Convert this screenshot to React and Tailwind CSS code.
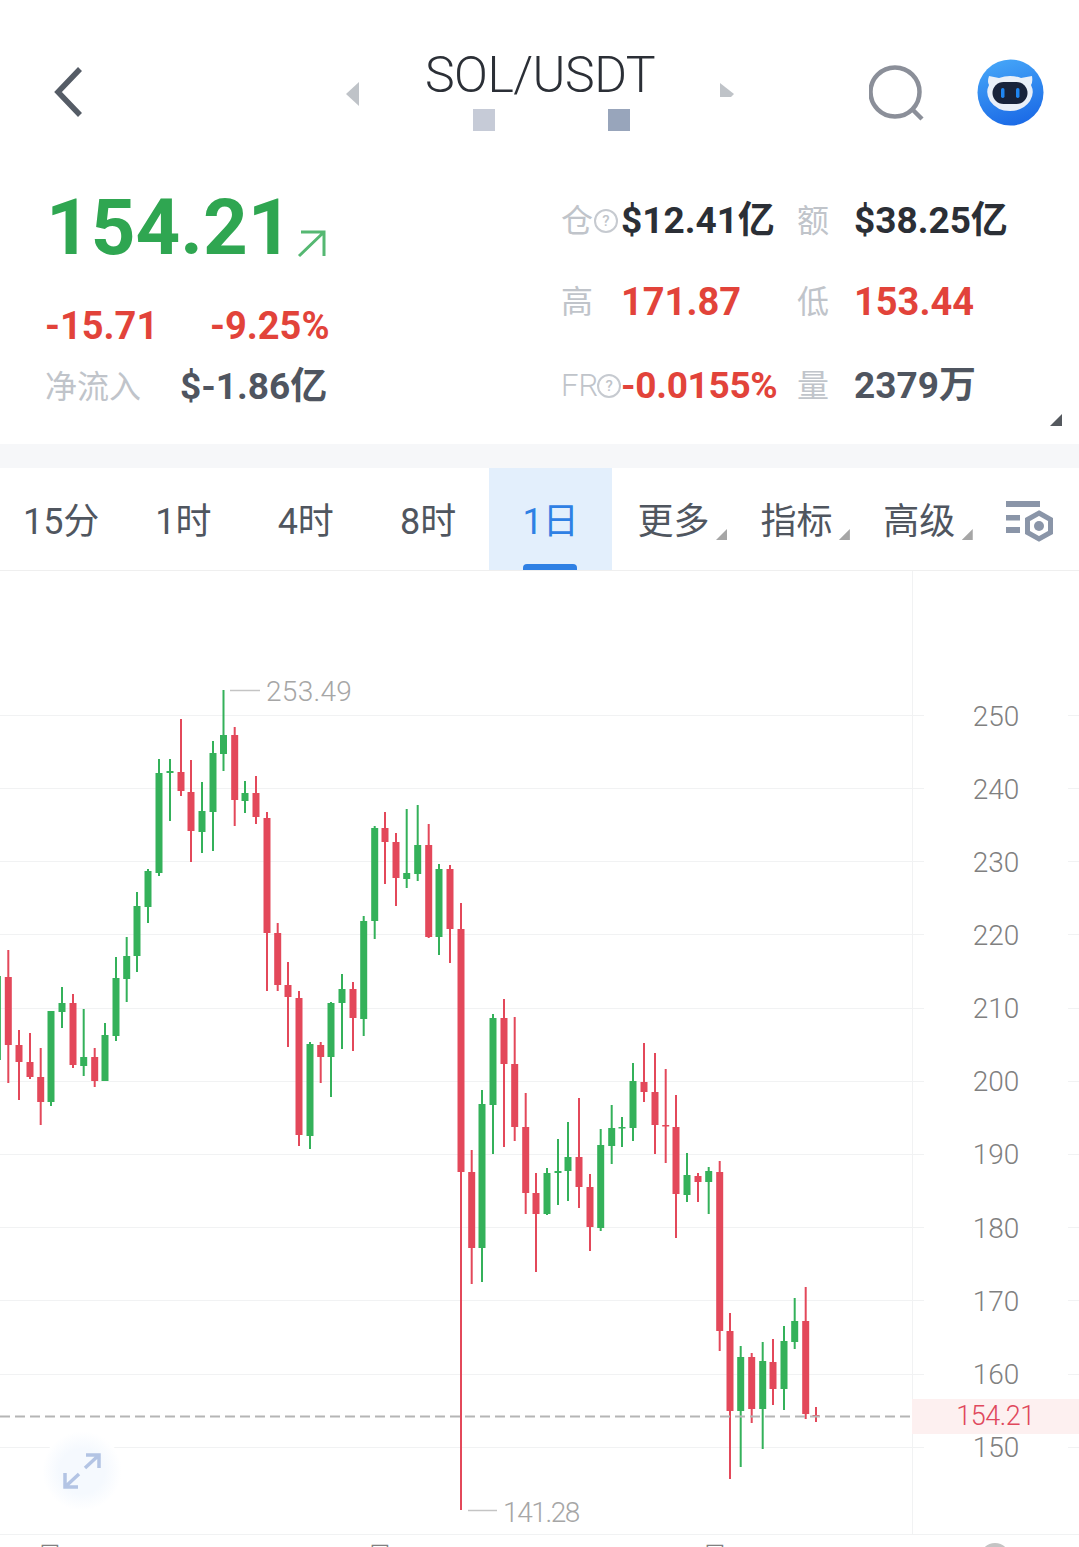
import React from 'react';

const G = '#34b15a';
const R = '#e3485a';

// x, wick top, wick bottom, body top, body bottom, colour (page coordinates)
const candles = [
    [-2.6, 960, 1060, 976, 1060, G],
    [8.3, 950, 1083, 977, 1045, R], [19, 1030, 1100, 1045, 1062, R], [30, 1033, 1079, 1062, 1077, R],
    [40.7, 1048, 1125, 1077, 1102, R], [51, 1011, 1106, 1011, 1102, G], [62, 987, 1028, 1003, 1012, G],
    [73, 994, 1068, 1003, 1065, R], [83.7, 1009, 1076, 1057, 1066, G], [94.7, 1048, 1087, 1057, 1081, R],
    [105, 1023, 1081, 1035, 1081, G], [116, 957, 1041, 978, 1036, G], [126.7, 937, 1002, 956, 979, G],
    [137, 892, 972, 906, 956, G], [148, 869, 923, 871, 907, G], [159, 759, 876, 773, 873, G],
    [170, 759, 821, 771, 773, G], [181, 719, 796, 772, 791, R], [191, 760, 862, 792, 831, R],
    [202, 782, 853, 811, 832, G], [213, 741, 851, 753, 812, G], [223.5, 690, 771, 735, 754, G],
    [234.7, 727, 826, 735, 800, R], [245, 781, 813, 793, 801, G], [256, 776, 824, 793, 817, R],
    [267, 812, 991, 818, 933, R], [277.7, 923, 991, 933, 985, R], [288, 962, 1047, 985, 997, R],
    [299, 991, 1146, 998, 1135, R], [310, 1042, 1149, 1044, 1136, G], [320.7, 1042, 1083, 1045, 1057, R],
    [331, 1002, 1097, 1003, 1057, G], [342, 974, 1049, 989, 1003, G], [353, 982, 1051, 989, 1018, R],
    [363.7, 916, 1036, 921, 1019, G], [374.7, 826, 939, 828, 921, G], [385, 812, 884, 828, 842, R],
    [396, 833, 906, 842, 878, R], [406.7, 809, 888, 873, 879, G], [417.7, 805, 881, 845, 874, G],
    [428.7, 824, 938, 845, 937, R], [439, 864, 955, 869, 937, G], [450, 865, 963, 869, 929, R],
    [461, 903, 1510, 929, 1172, R], [471.7, 1150, 1284, 1172, 1248, R], [482, 1090, 1282, 1104, 1248, G],
    [493, 1014, 1154, 1018, 1105, G], [504, 999, 1147, 1018, 1064, R], [514.7, 1017, 1141, 1064, 1127, R],
    [525.7, 1093, 1214, 1127, 1193, R], [536, 1173, 1272, 1193, 1214, R], [547, 1168, 1215, 1173, 1214, G],
    [558, 1139, 1205, 1171, 1173, G], [568, 1122, 1201, 1157, 1171, G], [579, 1098, 1208, 1157, 1187, R],
    [590, 1174, 1251, 1187, 1227, R], [600.7, 1129, 1231, 1145, 1228, G], [611.7, 1105, 1164, 1128, 1146, G],
    [622, 1117, 1147, 1127, 1128.5, G], [633, 1063, 1141, 1081, 1128, G], [644, 1043, 1102, 1082, 1092, R],
    [655, 1053, 1154, 1092, 1125, R], [665.7, 1069, 1163, 1125, 1126.5, R], [676, 1095, 1238, 1127, 1194, R],
    [687, 1153, 1202, 1175, 1195, G], [698, 1173, 1202, 1176, 1182, R], [708.7, 1167, 1214, 1171, 1182, G],
    [719.7, 1161, 1351, 1172, 1331, R], [730, 1313, 1479, 1331, 1411, R], [740.7, 1346, 1467, 1357, 1411, G],
    [751.7, 1353, 1423, 1357, 1409, R], [762.7, 1342, 1449, 1361, 1409, G], [773, 1339, 1405, 1362, 1389, R],
    [784, 1326, 1410, 1341, 1389, G], [794.7, 1298, 1349, 1321, 1342, G], [805.7, 1287, 1419, 1321, 1414, R],
    [816, 1407, 1422, 1415, 1416.5, R],
];

const gridLines = [715, 788, 861, 934, 1008, 1081, 1154, 1227, 1300, 1374, 1447];
const axisLabels = [250, 240, 230, 220, 210, 200, 190, 180, 170, 160, 150];

function Corner({ className }) {
    return <span className={`block [clip-path:polygon(100%_0,100%_100%,0_100%)] ${className}`}></span>;
}

function Help({ className }) {
    return (
        <span className={`flex h-[24px] w-[24px] shrink-0 items-center justify-center rounded-full border-2 border-[#c6cad0] text-[15px] font-medium leading-none text-[#c0c4ca] ${className}`}>?</span>
    );
}

function Avatar() {
    return (
        <svg width="67" height="67" viewBox="0 0 67 67">
            <defs>
                <linearGradient id="av" x1="0.3" y1="0" x2="0.6" y2="1">
                    <stop offset="0" stopColor="#45a5f8" />
                    <stop offset="1" stopColor="#1b6ae6" />
                </linearGradient>
            </defs>
            <circle cx="33.5" cy="33.5" r="33" fill="url(#av)" />
            <path d="M12 17 L22 19 Q33 15 44 19 L55 17 Q56 23 54 26 Q58 34 53 42 Q46 52 33 52 Q20 52 13 42 Q8 34 12 26 Q10 23 12 17 Z" fill="#e9eff8" />
            <rect x="15.500" y="23" width="35" height="22" rx="11" fill="#18233b" />
            <rect x="24" y="29" width="3.500" height="10" rx="1.700" fill="#1f86f2" />
            <rect x="39" y="29" width="3.500" height="10" rx="1.700" fill="#1f86f2" />
        </svg>
    );
}

function Header() {
    return (
        <header className="flex h-[160px]">
            <div className="w-[345px] pl-[54px] pt-[66px]">
                <svg width="30" height="52" viewBox="0 0 30 52" fill="none">
                    <path d="M26 3 L4 26 L26 49" stroke="#555c66" strokeWidth="5.500" />
                </svg>
            </div>
            <div className="flex w-[390px]">
                <svg className="mt-[81px] shrink-0" width="16" height="26" viewBox="0 0 16 26">
                    <path d="M1 13 L14 1 L14 25 Z" fill="#bfc3c8" />
                </svg>
                <div className="flex flex-1 flex-col items-center pt-[46px]">
                    <div className="text-[50px] font-light leading-[58px] tracking-[-0.5px] text-[#2b2f36]">SOL/USDT</div>
                    <div className="ml-[23px] mt-[5px] flex gap-[113px]">
                        <span className="h-[22px] w-[22px] bg-[#c6cbd7]"></span>
                        <span className="h-[22px] w-[22px] bg-[#98a5bb]"></span>
                    </div>
                </div>
                <svg className="mt-[82px] shrink-0" width="16" height="16" viewBox="0 0 16 16">
                    <path d="M1 1 L15 12 L12 15 L1 15 Z" fill="#bfc3c8" />
                </svg>
            </div>
            <div className="flex flex-1 items-start pl-[134px] pt-[59px]">
                <svg className="mt-[6px]" width="58" height="56" viewBox="0 0 58 56" fill="none">
                    <circle cx="26" cy="27" r="24.500" stroke="#8b8f99" strokeWidth="4.500" />
                    <path d="M43 44 L53 54" stroke="#8b8f99" strokeWidth="4.500" />
                </svg>
                <div className="ml-[50px]"><Avatar /></div>
            </div>
        </header>
    );
}

function StatRow({ label, value, valueClass, label2, value2, value2Class, className }) {
    const num = 'font-bold leading-[46px] whitespace-nowrap';
    return (
        <div className={`flex items-center ${className}`}>
            <div className="flex w-[60px] items-center text-[32px] leading-[46px] text-[#c0c4ca]">{label}</div>
            <div className={`w-[176px] ${num} ${valueClass}`}>{value}</div>
            <div className="w-[57px] text-[32px] leading-[46px] text-[#c0c4ca]">{label2}</div>
            <div className={`${num} ${value2Class}`}>{value2}</div>
        </div>
    );
}

function Summary() {
    return (
        <section className="relative flex h-[284px]">
            <div className="w-[561px] pl-[45px] pt-[20px]">
                <div className="flex items-end">
                    <span className="pl-[1px] text-[78px] font-bold leading-[96px] text-[#2fa651]">154.21</span>
                    <svg className="mb-[17px] ml-[5px]" width="30" height="30" viewBox="0 0 30 30" fill="none">
                        <path d="M2 27 L27 3 M4 3 H27 V27" stroke="#55b872" strokeWidth="3" />
                    </svg>
                </div>
                <div className="mt-[25px] flex items-center text-[38px] font-bold leading-[50px] text-[#e2433a]">
                    <span className="w-[165px]">-15.71</span>
                    <span>-9.25%</span>
                </div>
                <div className="mt-[11px] flex items-center">
                    <span className="w-[135px] text-[32px] leading-[50px] text-[#c0c4ca]">净流入</span>
                    <span className="text-[37px] font-bold leading-[50px] text-[#4f5560]">$-1.86亿</span>
                </div>
            </div>
            <div className="flex-1 pt-[38px]">
                <StatRow
                    label={<>仓<Help className="ml-[1px]" /></>}
                    value="$12.41亿"
                    valueClass="text-[37px] text-[#2b2f36]"
                    label2="额"
                    value2="$38.25亿"
                    value2Class="text-[37px] text-[#2b2f36]"
                />
                <StatRow
                    className="mt-[35px]"
                    label="高"
                    value="171.87"
                    valueClass="text-[38px] text-[#e2433a]"
                    label2="低"
                    value2="153.44"
                    value2Class="text-[38px] text-[#e2433a]"
                />
                <StatRow
                    className="mt-[38px]"
                    label={<><span className="text-[31px] font-light">FR</span><Help className="-ml-[1px]" /></>}
                    value="-0.0155%"
                    valueClass="text-[37px] tracking-[-0.3px] text-[#e2433a]"
                    label2="量"
                    value2="2379万"
                    value2Class="text-[37px] text-[#4f5560]"
                />
            </div>
            <Corner className="absolute bottom-[18px] right-[17px] h-[12px] w-[12px] bg-[#55595f]" />
        </section>
    );
}

function Tab({ children, active, more, narrow }) {
    return (
        <div className={`relative flex h-full items-center justify-center pt-[5px] text-[36px] ${narrow ? 'w-[122.3px]' : 'w-[122.9px]'} ${active ? 'bg-[#e3effc] text-[#2f80e4]' : 'text-[#50565f]'}`}>
            <span>{children}</span>
            {more && <Corner className="absolute bottom-[30px] right-[8px] h-[11px] w-[11px] bg-[#a6a6a6]" />}
            {active && <span className="absolute bottom-0 left-[34px] h-[6px] w-[54px] rounded-t-[4px] bg-[#2f80e4]"></span>}
        </div>
    );
}

function Tabs() {
    return (
        <nav className="flex h-[103px] border-b border-[#efefef]">
            <Tab narrow>15分</Tab>
            <Tab narrow>1时</Tab>
            <Tab narrow>4时</Tab>
            <Tab narrow>8时</Tab>
            <Tab active>1日</Tab>
            <Tab more>更多</Tab>
            <Tab more>指标</Tab>
            <Tab more>高级</Tab>
            <div className="flex flex-1 items-center pl-[25px] pt-[5px]">
                <svg width="50" height="44" viewBox="0 0 50 44">
                    <rect x="0" y="1" width="34" height="6" fill="#8a95a8" />
                    <rect x="0" y="15" width="14" height="5.500" fill="#8a95a8" />
                    <rect x="0" y="27" width="14" height="6" fill="#8a95a8" />
                    <path d="M33 13 L44.500 19.500 V32.500 L33 39 L21.500 32.500 V19.500 Z" fill="none" stroke="#8a95a8" strokeWidth="5" />
                    <circle cx="33" cy="26" r="5" fill="#8a95a8" />
                </svg>
            </div>
        </nav>
    );
}

function CandleChart() {
    return (
        <svg className="absolute inset-0" width="1079" height="964" viewBox="0 571 1079 964">
            {gridLines.map(y => (
                <g key={y} stroke="#f1f2f3" strokeWidth="1">
                    <line x1="0" y1={y + 0.5} x2="924" y2={y + 0.5} />
                    <line x1="1068" y1={y + 0.5} x2="1079" y2={y + 0.5} />
                </g>
            ))}
            {candles.map(([x, wt, wb, bt, bb, c]) => (
                <g key={x} fill={c}>
                    <rect x={x - 1} y={wt} width="2" height={wb - wt} />
                    <rect x={x - 3.5} y={bt} width="7" height={bb - bt} />
                </g>
            ))}
            <line x1="0" y1="1416.500" x2="910" y2="1416.500" stroke="#b5b5b5" strokeWidth="2" strokeDasharray="10 5" />
            <line x1="230" y1="690.500" x2="260" y2="690.500" stroke="#c4c4c4" strokeWidth="1.500" />
            <line x1="468" y1="1510.500" x2="497" y2="1510.500" stroke="#c4c4c4" strokeWidth="1.500" />
        </svg>
    );
}

function Chart() {
    return (
        <section className="relative flex h-[964px] border-b border-[#f1f2f3]">
            <CandleChart />
            <div className="w-[912px]"></div>
            <div className="relative flex-1 border-l border-[#f1f2f3] pt-[109px]">
                {axisLabels.map(v => (
                    <div key={v} className="flex h-[73.15px] items-center justify-center text-[28px] font-light text-[#808080]">{v}</div>
                ))}
            </div>
            <span className="absolute left-[266px] top-[102px] text-[28px] font-light leading-[38px] tracking-[0.3px] text-[#a6a6a6]">253.49</span>
            <span className="absolute left-[503px] top-[923px] text-[28px] font-light leading-[38px] tracking-[-1.4px] text-[#a6a6a6]">141.28</span>
            <div className="absolute left-[912px] top-[828px] flex h-[35px] w-[167px] items-center justify-center bg-[#fdf0f0] text-[27px] font-light tracking-[-0.5px] text-[#e0485c]">154.21</div>
            <div className="absolute left-[42px] top-[860px] flex h-[80px] w-[80px] items-center justify-center rounded-full bg-[radial-gradient(circle,#f5f9fe_40%,#ffffff_70%)]">
                <svg width="38" height="36" viewBox="0 0 38 36" fill="none">
                    <path d="M22 15 L36 2 M23 2 H36 V15" stroke="#b3c4e4" strokeWidth="3.500" />
                    <path d="M16 21 L2 34 M2 20 V34 H15" stroke="#b3c4e4" strokeWidth="3.500" />
                </svg>
            </div>
        </section>
    );
}

export default function App() {
    return (
        <div className="h-[1547px] w-[1079px] overflow-hidden bg-white font-[Roboto,'Noto_Sans_CJK_SC',sans-serif]">
            <Header />
            <Summary />
            <div className="h-[24px] bg-[#f6f7f9]"></div>
            <Tabs />
            <Chart />
            <div className="relative flex h-[11px]">
                <span className="absolute -left-[1px] top-[6px] w-[70px] text-center text-[28px] font-light leading-[34px] text-[#808080]">09月</span>
                <span className="absolute left-[329px] top-[6px] w-[70px] text-center text-[28px] font-light leading-[34px] text-[#808080]">10月</span>
                <span className="absolute left-[664px] top-[6px] w-[70px] text-center text-[28px] font-light leading-[34px] text-[#808080]">11月</span>
                <span className="absolute left-[980px] top-[8px] h-[30px] w-[30px] rounded-full bg-[#c4c4c4]"></span>
            </div>
        </div>
    );
}
